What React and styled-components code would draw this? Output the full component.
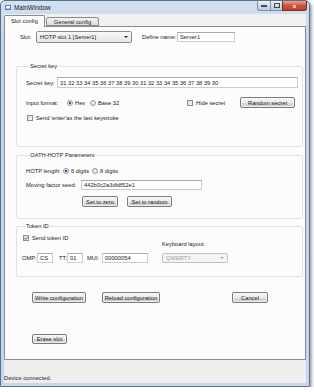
import React from 'react'
import styled, { createGlobalStyle } from 'styled-components'

const Global = createGlobalStyle`
    html, body { margin: 0; padding: 0; background: #fff; }
    body {
        font-family: "Liberation Sans", Arial, sans-serif;
        font-size: 5.75px;
        color: #222;
    }
    * { box-sizing: border-box; }
`;

const Window = styled.div`
    width: 310px;
    height: 387px;
    border: 1px solid #5b6f86;
    border-radius: 5px 5px 1px 1px;
    background: linear-gradient(#d3e2f2, #bfd4ec 40px, #c3d7ee);
    box-shadow: 2px 2px 3px rgba(0,0,0,.35);
    display: flex;
    flex-direction: column;
    padding: 0 3px 3px;
`;

const TitleBar = styled.div`
    height: 13px;
    display: flex;
    align-items: flex-start;
`;

const AppIcon = styled.div`
    width: 6px;
    height: 5px;
    margin: 4px 3px 0 1px;
    border: 1px solid #5d7db0;
    background: linear-gradient(#ffffff 40%, #8fb0dc);
`;

const TitleText = styled.span`
    font-size: 6.4px;
    line-height: 13px;
    color: #1a1a1a;
`;

const CaptionButtons = styled.div`
    margin-left: auto;
    margin-right: -1px;
    display: flex;
`;

const CaptionButton = styled.div`
    width: ${p => p.$w}px;
    height: 10px;
    border: 1px solid ${p => p.$close ? '#7a2a22' : '#7d8ea3'};
    border-top: none;
    margin-left: -1px;
    background: ${p => p.$close
        ? 'linear-gradient(#e8a493, #d0533e 50%, #c2402b)'
        : 'linear-gradient(#edf3f9, #cfdbea 50%, #bccde2)'};
    border-radius: ${p => p.$r || '0'};
    display: flex;
    align-items: center;
    justify-content: center;
    color: #fff;
    font-size: 6px;
    font-weight: bold;
`;

const Client = styled.div`
    flex: 1;
    background: #f0f0f0;
    display: flex;
    flex-direction: column;
`;

const TabBar = styled.div`
    height: 12px;
    display: flex;
    align-items: flex-end;
    position: relative;
    z-index: 1;
`;

const Tab = styled.div`
    height: ${p => p.$active ? 12 : 9}px;
    padding: 0 ${p => p.$active ? 6 : 7}px;
    margin-bottom: ${p => p.$active ? -1 : 0}px;
    margin-left: ${p => p.$active ? 0 : 1}px;
    border: 1px solid #898c95;
    border-bottom: ${p => p.$active ? 'none' : '1px solid #898c95'};
    border-radius: 2px 2px 0 0;
    background: ${p => p.$active ? '#fcfcfc' : 'linear-gradient(#f2f2f2, #dcdcdc)'};
    line-height: ${p => p.$active ? 10 : 8}px;
`;

const Pane = styled.div`
    height: 334px;
    border: 1px solid #898c95;
    background: #fcfcfc;
    display: flex;
    flex-direction: column;
    padding: 4px 0 0 0;
`;

const Row = styled.div`
    display: flex;
    align-items: center;
    margin-top: ${p => p.$mt || 0}px;
    margin-left: ${p => p.$ml || 0}px;
    margin-right: ${p => p.$mr || 0}px;
`;

const Spacer = styled.div`
    flex: 1;
`;

const Label = styled.span`
    flex: none;
    width: ${p => p.$w ? p.$w + 'px' : 'auto'};
    margin-left: ${p => p.$ml || 0}px;
    white-space: nowrap;
`;

const TextInput = styled.div`
    flex: ${p => p.$w ? 'none' : 1};
    width: ${p => p.$w ? p.$w + 'px' : 'auto'};
    height: ${p => p.$h || 11}px;
    margin-left: ${p => p.$ml || 0}px;
    border: 1px solid #c9cdd3;
    border-top-color: #a5a9b1;
    background: #fff;
    padding-left: 2px;
    display: flex;
    align-items: center;
    white-space: nowrap;
    overflow: hidden;
`;

const Combo = styled.div`
    width: ${p => p.$w}px;
    height: ${p => p.$h || 12}px;
    margin-top: ${p => p.$mt || 0}px;
    border: 1px solid ${p => p.$disabled ? '#bfc3c8' : '#8c8c8c'};
    border-radius: 2px;
    background: ${p => p.$disabled ? '#f4f4f4' : 'linear-gradient(#f8f8f8, #e6e6e6)'};
    color: ${p => p.$disabled ? '#a0a0a0' : '#222'};
    display: flex;
    align-items: center;
    padding: 0 3px;
    white-space: nowrap;
    &::after {
        content: "";
        margin-left: auto;
        border-left: 2px solid transparent;
        border-right: 2px solid transparent;
        border-top: 2px solid ${p => p.$disabled ? '#b0b0b0' : '#222'};
    }
`;

const Group = styled.fieldset`
    margin: ${p => p.$mt}px 0 0 11px;
    width: 287px;
    padding: ${p => p.$pad};
    border: 1px solid #dbe3ea;
    border-radius: 2px;
    min-width: 0;
`;

const Legend = styled.legend`
    padding: 0 1px;
    margin-left: 3px;
    line-height: 8px;
`;

const Radio = styled.span`
    flex: none;
    width: 6px;
    height: 6px;
    border-radius: 50%;
    margin-right: 2px;
    border: 1px solid #8e9aa8;
    background: ${p => p.$checked
        ? 'radial-gradient(circle, #2b5fa8 0 1.3px, #e9eef4 1.6px)'
        : 'radial-gradient(circle, #f4f4f4, #d6dbe0)'};
`;

const Check = styled.span`
    flex: none;
    width: 6px;
    height: 6px;
    margin-right: 3px;
    border: 1px solid #8f8f8f;
    background: linear-gradient(135deg, #dcdcdc, #f6f6f6);
    display: flex;
    align-items: center;
    justify-content: center;
`;

const Button = styled.div`
    flex: none;
    width: ${p => p.$w}px;
    height: ${p => p.$h || 11}px;
    margin-left: ${p => p.$ml || 0}px;
    border: 1px solid #7b7b7b;
    border-radius: 2px;
    background: linear-gradient(#f4f4f4, #ebebeb 50%, #dadada 51%, #cfcfcf);
    box-shadow: inset 0 0 0 1px rgba(255,255,255,.6);
    display: flex;
    align-items: center;
    justify-content: center;
    white-space: nowrap;
`;

const Cols = styled.div`
    display: flex;
    align-items: flex-end;
`;

const Col = styled.div`
    display: flex;
    flex-direction: column;
    margin-left: ${p => p.$ml || 0}px;
`;

const StatusBar = styled.div`
    flex: 1;
    display: flex;
    align-items: flex-end;
    padding: 0 0 2px 0;
    background: #eeeeee;
`;

function Tick() {
    return (
        <svg width="5" height="5" viewBox="0 0 5 5">
            <path d="M0.6 2.4 L2 3.8 L4.5 0.8" fill="none" stroke="#2c3e6b" strokeWidth="1" />
        </svg>
    )
}

export default function App() {
    return (
        <>
            <Global />
            <Window>
                <TitleBar>
                    <AppIcon />
                    <TitleText>MainWindow</TitleText>
                    <CaptionButtons>
                        <CaptionButton $w={14} $r="0 0 0 3px">
                            <svg width="6" height="3" viewBox="0 0 6 3"><rect x="0" y="1" width="6" height="2" fill="#445" /></svg>
                        </CaptionButton>
                        <CaptionButton $w={13}>
                            <svg width="6" height="5" viewBox="0 0 6 5"><rect x="0.5" y="0.5" width="5" height="4" fill="none" stroke="#445" /></svg>
                        </CaptionButton>
                        <CaptionButton $w={25} $close $r="0 0 3px 0">x</CaptionButton>
                    </CaptionButtons>
                </TitleBar>
                <Client>
                    <TabBar>
                        <Tab $active>Slot config</Tab>
                        <Tab>General config</Tab>
                    </TabBar>
                    <Pane>
                        <Row $ml={15}>
                            <Label $w={16}>Slot:</Label>
                            <Combo $w={96}>HOTP slot 1 [Server1]</Combo>
                            <Label $ml={10} $w={35}>Define name:</Label>
                            <TextInput $w={58} $h={10}>Server1</TextInput>
                        </Row>

                        <Group $mt={19} $pad="0 4px 25px 9px">
                            <Legend>Secret key</Legend>
                            <Row $mt={7}>
                                <Label $w={31}>Secret key:</Label>
                                <TextInput>31 32 33 34 35 36 37 38 39 30 31 32 33 34 35 36 37 38 39 30</TextInput>
                            </Row>
                            <Row $mt={9} $mr={3}>
                                <Label $w={41}>Input format:</Label>
                                <Radio $checked />
                                <Label $w={15}>Hex</Label>
                                <Radio />
                                <Label>Base 32</Label>
                                <Spacer />
                                <Check />
                                <Label $w={44}>Hide secret</Label>
                                <Button $w={55}>Random secret</Button>
                            </Row>
                            <Row $mt={7} $ml={1}>
                                <Check />
                                <Label>Send 'enter'as the last keystroke</Label>
                            </Row>
                        </Group>

                        <Group $mt={4} $pad="0 4px 11px 9px">
                            <Legend>OATH-HOTP Parameters</Legend>
                            <Row $mt={9}>
                                <Label $w={37}>HOTP length:</Label>
                                <Radio $checked />
                                <Label $w={21}>6 digits</Label>
                                <Radio />
                                <Label>8 digits</Label>
                            </Row>
                            <Row $mt={6}>
                                <Label $w={55}>Moving factor seed:</Label>
                                <TextInput $w={121} $h={10}>442b0c2a3db852e1</TextInput>
                            </Row>
                            <Row $mt={6} $ml={56}>
                                <Button $w={36}>Set to zero</Button>
                                <Button $w={45} $ml={9}>Set to random</Button>
                            </Row>
                        </Group>

                        <Group $mt={3} $pad="0 4px 13px 5px">
                            <Legend>Token ID</Legend>
                            <Cols>
                                <Col>
                                    <Row $mt={5} $ml={1}>
                                        <Check><Tick /></Check>
                                        <Label>Send token ID</Label>
                                    </Row>
                                    <Row $mt={12}>
                                        <Label $w={15}>OMP:</Label>
                                        <TextInput $w={16} $h={10}>CS</TextInput>
                                        <Label $ml={6} $w={8}>TT:</Label>
                                        <TextInput $w={16} $h={10}>01</TextInput>
                                        <Label $ml={4} $w={15}>MUI:</Label>
                                        <TextInput $w={46} $h={10}>00000054</TextInput>
                                    </Row>
                                </Col>
                                <Col $ml={14}>
                                    <Label>Keyboard layout:</Label>
                                    <Combo $w={66} $h={10} $mt={6} $disabled>QWERTY</Combo>
                                </Col>
                            </Cols>
                        </Group>

                        <Row $mt={15} $ml={27}>
                            <Button $w={54}>Write configuration</Button>
                            <Button $w={58} $ml={16}>Reload configuration</Button>
                            <Button $w={36} $ml={72}>Cancel</Button>
                        </Row>
                        <Row $mt={31} $ml={27}>
                            <Button $w={35} $h={10}>Erase slot</Button>
                        </Row>
                    </Pane>
                    <StatusBar>Device connected.</StatusBar>
                </Client>
            </Window>
        </>
    )
}
